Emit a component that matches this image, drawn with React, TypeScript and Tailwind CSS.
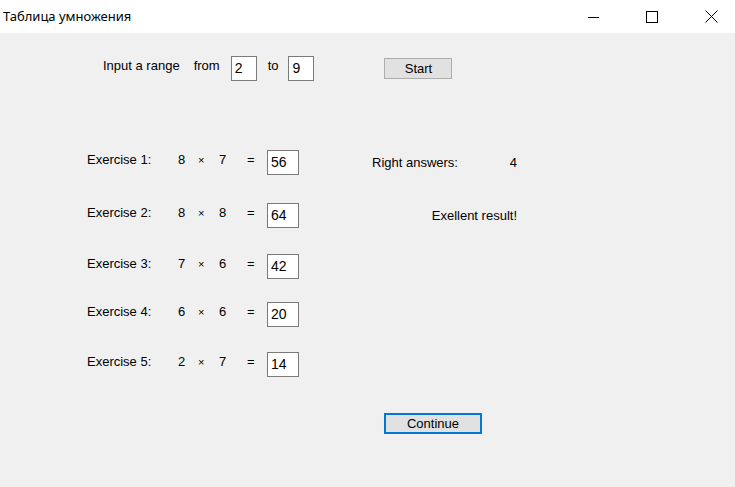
import React from "react";

type Exercise = { n: number; a: number; b: number; answer: string; gap: string };

const EXERCISES: Exercise[] = [
  { n: 1, a: 8, b: 7, answer: "56", gap: "mt-0" },
  { n: 2, a: 8, b: 8, answer: "64", gap: "mt-[28px]" },
  { n: 3, a: 7, b: 6, answer: "42", gap: "mt-[26px]" },
  { n: 4, a: 6, b: 6, answer: "20", gap: "mt-[23px]" },
  { n: 5, a: 2, b: 7, answer: "14", gap: "mt-[25px]" },
];

const font = "font-['Liberation_Sans',Arial,sans-serif]";

function TextBox({ value, width }: { value: string; width: string }) {
  return (
    <div
      className={`flex h-[25px] ${width} items-center border border-[#7a7a7a] bg-white pl-[3px] text-[14px] text-black`}
    >
      {value}
    </div>
  );
}

function TitleBar() {
  return (
    <div className="flex h-[33px] items-center bg-white">
      <span className="pl-[3px] font-['Noto_Sans',sans-serif] text-[13px] text-black">
        Таблица умножения
      </span>
      <div className="ml-auto flex h-full items-center">
        <svg width="12" height="12" viewBox="0 0 12 12" className="mr-[46px]">
          <path d="M0 6.5h11" stroke="#000" strokeWidth="1" />
        </svg>
        <svg width="12" height="12" viewBox="0 0 12 12" className="mr-[47px]">
          <rect x="0.5" y="0.5" width="11" height="11" fill="none" stroke="#000" strokeWidth="1" />
        </svg>
        <svg width="13" height="13" viewBox="0 0 13 13" className="mr-[17px]">
          <path d="M0.5 0.5l12 12M12.5 0.5l-12 12" stroke="#000" strokeWidth="1" />
        </svg>
      </div>
    </div>
  );
}

export default function App() {
  return (
    <div className={`h-[487px] w-[735px] overflow-hidden bg-[#f0f0f0] ${font} text-[13px] text-black`}>
      <TitleBar />

      <div className="flex items-center pl-[103px] pt-[23px]">
        <span className="pb-[5px]">Input a range</span>
        <span className="ml-[14px] pb-[5px]">from</span>
        <div className="ml-[11px]">
          <TextBox value="2" width="w-[26px]" />
        </div>
        <span className="ml-[11px] pb-[5px]">to</span>
        <div className="ml-[10px]">
          <TextBox value="9" width="w-[26px]" />
        </div>
        <button className="ml-[70px] h-[21px] w-[68px] border border-[#adadad] bg-[#e1e1e1] text-[13px] text-black">
          Start
        </button>
      </div>

      <div className="mt-[69px] flex pl-[87px]">
        <div className="flex flex-col">
          {EXERCISES.map((ex) => (
            <div key={ex.n} className={`flex h-[25px] items-center ${ex.gap}`}>
              <span className="w-[91px] pb-[5px]">Exercise {ex.n}:</span>
              <span className="w-[20px] pb-[5px]">{ex.a}</span>
              <span className="w-[21px] pb-[5px] text-[11px]">×</span>
              <span className="w-[28px] pb-[5px]">{ex.b}</span>
              <span className="w-[20px] pb-[5px]">=</span>
              <TextBox value={ex.answer} width="w-[32px]" />
            </div>
          ))}
        </div>

        <div className="ml-[73px] flex w-[145px] flex-col">
          <div className="flex h-[25px] items-center justify-between">
            <span>Right answers:</span>
            <span>4</span>
          </div>
          <div className="mt-[28px] flex h-[25px] items-center justify-end">
            <span>Exellent result!</span>
          </div>
        </div>
      </div>

      <div className="mt-[36px] pl-[384px]">
        <button className="flex h-[21px] w-[98px] items-center justify-center border-2 border-[#0078d7] bg-[#e1e1e1] text-[13px] text-black">
          Continue
        </button>
      </div>
    </div>
  );
}
